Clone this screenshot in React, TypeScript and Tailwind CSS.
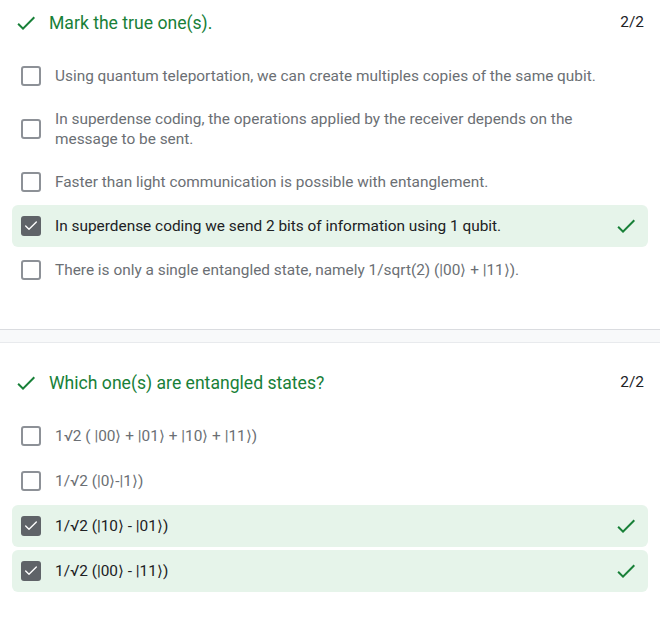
import { Check } from "lucide-react";

type Option = {
  text: string;
  checked?: boolean;
};

const section1: Option[] = [
  { text: "Using quantum teleportation, we can create multiples copies of the same qubit." },
  {
    text: "In superdense coding, the operations applied by the receiver depends on the message to be sent.",
  },
  { text: "Faster than light communication is possible with entanglement." },
  { text: "In superdense coding we send 2 bits of information using 1 qubit.", checked: true },
  { text: "There is only a single entangled state, namely 1/sqrt(2) (|00⟩ + |11⟩)." },
];

const section2: Option[] = [
  { text: "1√2 ( |00⟩ + |01⟩ + |10⟩ + |11⟩)" },
  { text: "1/√2 (|0⟩-|1⟩)" },
  { text: "1/√2 (|10⟩ - |01⟩)", checked: true },
  { text: "1/√2 (|00⟩ - |11⟩)", checked: true },
];

// material "check" glyph
const CheckMark = ({ className }: { className?: string }) => (
  <svg viewBox="0 0 24 24" className={className} fill="currentColor">
    <path d="M9 16.17L4.83 12l-1.42 1.41L9 19 21 7l-1.41-1.41z" />
  </svg>
);

const Checkbox = ({ checked }: { checked?: boolean }) =>
  checked ? (
    <div className="w-5 h-5 shrink-0 rounded-[3px] bg-[#5f6368] flex items-center justify-center">
      <Check className="w-4 h-4 text-white" strokeWidth={2} />
    </div>
  ) : (
    <div className="w-5 h-5 shrink-0 rounded-[3px] border-2 border-[#8d9197] bg-white" />
  );

const OptionRow = ({ opt }: { opt: Option }) => (
  <div
    className={
      opt.checked
        ? "flex items-center min-h-[42px] rounded-md bg-[#e6f4ea] pl-[9px] pr-[10px] py-[10px]"
        : "flex items-center min-h-[42px] rounded-md pl-[9px] pr-[10px] py-[10px]"
    }
  >
    <Checkbox checked={opt.checked} />
    <span
      className={
        opt.checked
          ? "flex-1 ml-[14px] text-[15.4px] leading-5 text-[#202124]"
          : "flex-1 ml-[14px] text-[15.4px] leading-5 text-[#6b6f74]"
      }
    >
      {opt.text}
    </span>
    <div className="w-8 h-5 flex items-center justify-end">
      {opt.checked && <CheckMark className="w-6 h-6 -my-[2px] text-[#188038]" />}
    </div>
  </div>
);

const Question = ({
  title,
  options,
  listClass,
}: {
  title: string;
  options: Option[];
  listClass: string;
}) => (
  <div className="px-3">
    <div className="flex items-center h-6 pl-[2px] pr-1">
      <CheckMark className="w-6 h-6 text-[#188038]" />
      <span className="ml-[11px] text-[17.6px] text-[#188038] flex-1">{title}</span>
      <span className="text-[15.4px] text-[#202124]">2/2</span>
    </div>
    <div className={listClass}>
      {options.map((o, i) => (
        <OptionRow key={i} opt={o} />
      ))}
    </div>
  </div>
);

export default function App() {
  return (
    <div className="w-[660px] h-[618px] bg-white overflow-hidden font-['Roboto','Noto_Sans',sans-serif]">
      <div className="pt-[11px] pb-[38px]">
        <Question
          title="Mark the true one(s)."
          options={section1}
          listClass="mt-5 flex flex-col gap-[2px]"
        />
      </div>
      <div className="h-[14px] bg-[#f8f9fa] border-t border-[#dadce0] border-b border-b-[#e8eaed]" />
      <div className="pt-[28px]">
        <Question
          title="Which one(s) are entangled states?"
          options={section2}
          listClass="mt-5 flex flex-col gap-[3px]"
        />
      </div>
    </div>
  );
}
